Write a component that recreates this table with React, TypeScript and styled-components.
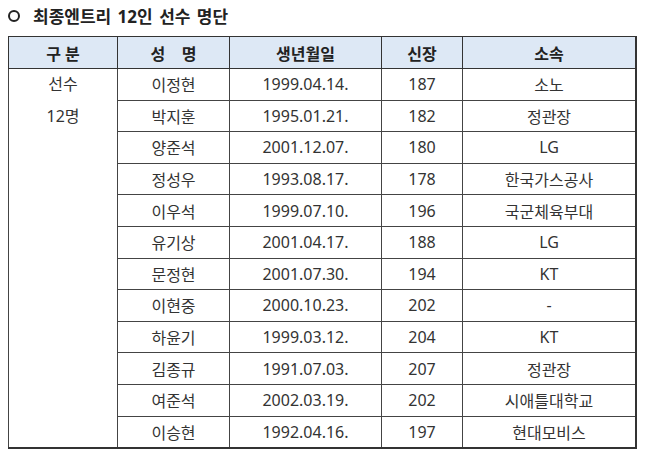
import React from "react";
import styled, { createGlobalStyle } from "styled-components";

interface Player {
    name: string;
    birth: string;
    height: number;
    team: string;
}

const players: Player[] = [
    { name: "이정현", birth: "1999.04.14.", height: 187, team: "소노" },
    { name: "박지훈", birth: "1995.01.21.", height: 182, team: "정관장" },
    { name: "양준석", birth: "2001.12.07.", height: 180, team: "LG" },
    { name: "정성우", birth: "1993.08.17.", height: 178, team: "한국가스공사" },
    { name: "이우석", birth: "1999.07.10.", height: 196, team: "국군체육부대" },
    { name: "유기상", birth: "2001.04.17.", height: 188, team: "LG" },
    { name: "문정현", birth: "2001.07.30.", height: 194, team: "KT" },
    { name: "이현중", birth: "2000.10.23.", height: 202, team: "-" },
    { name: "하윤기", birth: "1999.03.12.", height: 204, team: "KT" },
    { name: "김종규", birth: "1991.07.03.", height: 207, team: "정관장" },
    { name: "여준석", birth: "2002.03.19.", height: 202, team: "시애틀대학교" },
    { name: "이승현", birth: "1992.04.16.", height: 197, team: "현대모비스" },
];

const GlobalStyle = createGlobalStyle`
    html, body {
        margin: 0;
        padding: 0;
        background: #fff;
    }
    body {
        font-family: "Noto Sans", "Noto Sans CJK KR", sans-serif;
        color: #333;
    }
`;

const Page = styled.div`
    width: 647px;
    height: 458px;
    padding: 3px 0 0 8px;
    box-sizing: border-box;
`;

const Title = styled.h2`
    display: flex;
    align-items: center;
    margin: 0 0 8px 0;
    height: 25px;
    font-size: 17px;
    font-weight: 700;
    color: #222;
    word-spacing: 2px;
`;

const Circle = styled.span`
    width: 8px;
    height: 8px;
    border: 2px solid #222;
    border-radius: 50%;
    margin-right: 13px;
`;

const Table = styled.table`
    width: 629px;
    border-collapse: collapse;
    border: 1.5px solid #333;
    border-right-width: 2px;
    border-bottom-width: 2px;
    table-layout: fixed;
    font-size: 16px;
`;

const HeadCell = styled.th<{ $w?: number }>`
    width: ${(p) => (p.$w ? `${p.$w}px` : "auto")};
    height: 31px;
    padding: 0;
    background: #dde8f5;
    border: 1px solid #333;
    font-weight: 700;
    color: #222;
    white-space: pre;
`;

const Cell = styled.td`
    height: 30.6px;
    padding: 0;
    border: 1px solid #444;
    text-align: center;
    color: #333;
`;

const GroupCell = styled.td`
    padding: 0;
    vertical-align: top;
    text-align: center;
    border: 1px solid #444;
    line-height: 31.6px;
    color: #333;
`;

export default function App() {
    return (
        <Page>
            <GlobalStyle />
            <Title>
                <Circle />
                최종엔트리 12인 선수 명단
            </Title>
            <Table>
                <thead>
                    <tr>
                        <HeadCell $w={108}>구 분</HeadCell>
                        <HeadCell $w={111}>{"성    명"}</HeadCell>
                        <HeadCell $w={151}>생년월일</HeadCell>
                        <HeadCell $w={80}>신장</HeadCell>
                        <HeadCell>소속</HeadCell>
                    </tr>
                </thead>
                <tbody>
                    {players.map((p, i) => (
                        <tr key={p.name}>
                            {i === 0 && (
                                <GroupCell rowSpan={players.length}>
                                    선수
                                    <br />
                                    12명
                                </GroupCell>
                            )}
                            <Cell>{p.name}</Cell>
                            <Cell>{p.birth}</Cell>
                            <Cell>{p.height}</Cell>
                            <Cell>{p.team}</Cell>
                        </tr>
                    ))}
                </tbody>
            </Table>
        </Page>
    );
}
